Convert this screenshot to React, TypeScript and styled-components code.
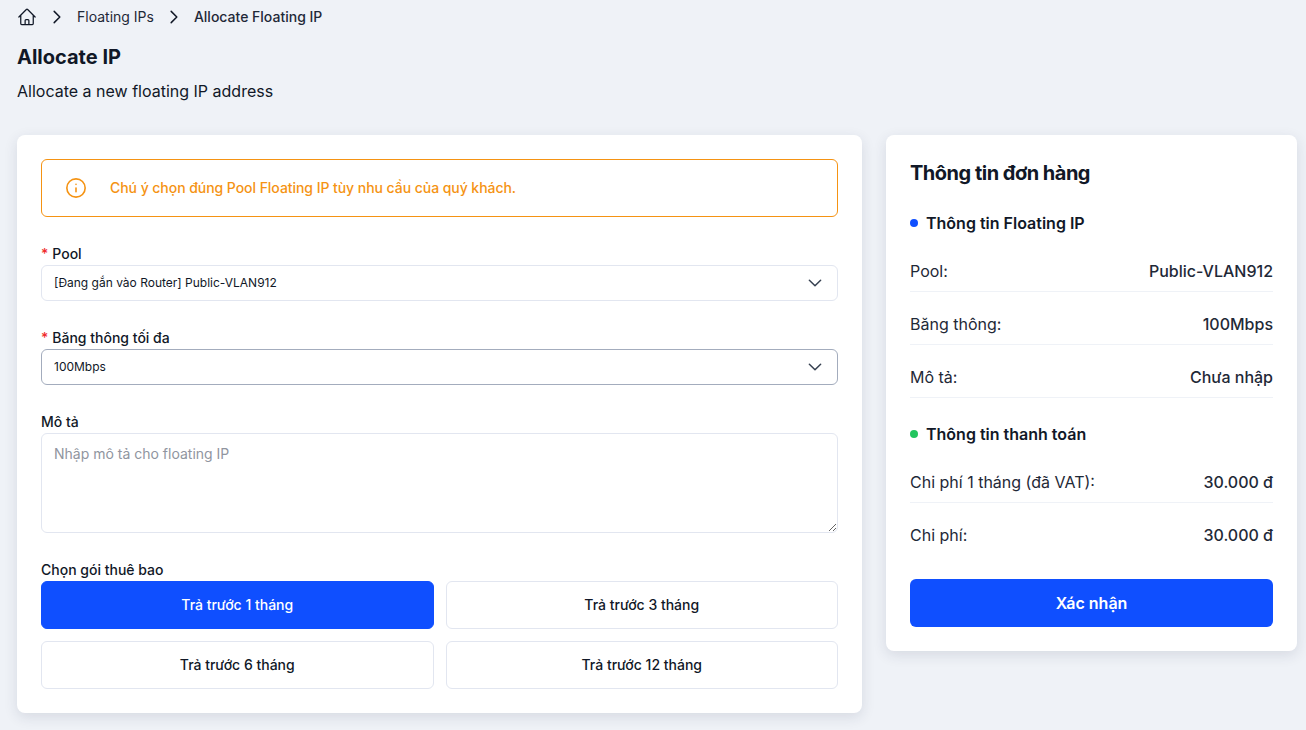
import React from 'react';
import styled, { createGlobalStyle } from 'styled-components';
import { HiOutlineHome, HiOutlineChevronRight, HiOutlineChevronDown } from 'react-icons/hi2';
import { Info } from 'lucide-react';

const GlobalStyle = createGlobalStyle`
    * {
        box-sizing: border-box;
    }

    html, body {
        margin: 0;
        padding: 0;
        background: #eff2f7;
    }

    body {
        font-family: Inter, "Noto Sans", sans-serif;
        color: #111827;
    }
`

const Page = styled.div`
    height: 730px;
    padding: 7px 9px 0 17px;
    overflow: hidden;
`

const Breadcrumb = styled.nav`
    display: flex;
    align-items: center;
    height: 20px;
    font-size: 14px;
    line-height: 20px;
`

const HomeLink = styled.span`
    display: flex;
    width: 20px;
    margin-right: 11px;
    color: #111827;
`

const Separator = styled.span`
    display: flex;
    width: 18px;
    margin-right: 11px;
    color: #111827;

    svg {
        stroke-width: 2;
    }
`

const Crumb = styled.span<{ $current?: boolean }>`
    margin-right: ${({ $current }) => $current ? '0' : '11px'};
    color: #1f2937;
    font-weight: ${({ $current }) => $current ? 500 : 400};
`

const Title = styled.h1`
    margin: 16px 0 0;
    font-size: 20px;
    line-height: 28px;
    font-weight: 700;
    color: #111827;
`

const Subtitle = styled.p`
    margin: 8px 0 0;
    font-size: 16px;
    line-height: 24px;
    color: #111827;
`

const Columns = styled.div`
    display: flex;
    align-items: flex-start;
    gap: 24px;
    margin-top: 32px;
`

const Card = styled.section`
    background: #fff;
    border-radius: 8px;
    padding: 24px;
    box-shadow: 0 4px 14px rgba(30, 40, 70, 0.12);
`

const FormCard = styled(Card)`
    width: 845px;
`

const SummaryCard = styled(Card)`
    width: 411px;
`

const Alert = styled.div`
    display: flex;
    align-items: center;
    gap: 23px;
    height: 58px;
    margin-bottom: 27px;
    padding: 0 23px;
    border: 1px solid #f59313;
    border-radius: 6px;
    color: #f59313;
    font-size: 14px;
    font-weight: 500;
    line-height: 20px;
    letter-spacing: -0.05px;
`

const Field = styled.div`
    margin-bottom: 27px;
`

const Label = styled.label`
    display: block;
    margin-bottom: 1px;
    font-size: 14px;
    line-height: 20px;
    font-weight: 500;
    color: #111827;
`

const Required = styled.span`
    margin-right: 4px;
    color: #ef2b2b;
`

const Select = styled.div<{ $active?: boolean }>`
    display: flex;
    align-items: center;
    justify-content: space-between;
    height: 36px;
    padding: 0 13px 0 12px;
    background: #fff;
    border: 1px solid ${({ $active }) => $active ? '#a3acbd' : '#e2e6f0'};
    border-radius: 6px;
    font-size: 12px;
    line-height: 16px;
    color: #111827;

    svg {
        color: #374151;
        stroke-width: 2;
    }
`

const Textarea = styled.textarea`
    display: block;
    width: 100%;
    height: 100px;
    padding: 10px 12px;
    background: #fff;
    border: 1px solid #e2e6f0;
    border-radius: 6px;
    outline: none;
    font-family: inherit;
    font-size: 14px;
    line-height: 20px;
    color: #111827;

    &::placeholder {
        color: #9095a0;
    }
`

const PlanGrid = styled.div`
    display: grid;
    grid-template-columns: 1fr 1fr;
    gap: 12px;
`

const PlanButton = styled.button<{ $selected?: boolean }>`
    height: 48px;
    padding: 0 0 2px;
    background: ${({ $selected }) => $selected ? '#0f4fff' : '#fff'};
    border: 1px solid ${({ $selected }) => $selected ? '#0f4fff' : '#e2e6f0'};
    border-radius: 6px;
    font-family: inherit;
    font-size: 14px;
    font-weight: 500;
    color: ${({ $selected }) => $selected ? '#fff' : '#111827'};
`

const SummaryTitle = styled.h2`
    margin: 0 0 24px;
    font-size: 20px;
    line-height: 28px;
    font-weight: 700;
    letter-spacing: -0.5px;
    color: #111827;
`

const SectionHeading = styled.h3`
    display: flex;
    align-items: center;
    gap: 8px;
    margin: 0 0 24px;
    font-size: 16px;
    line-height: 24px;
    font-weight: 600;
    color: #111827;
`

const Dot = styled.span<{ color: string }>`
    width: 8px;
    height: 8px;
    border-radius: 50%;
    background: ${({ color }) => color};
`

const Rows = styled.div`
    display: flex;
    flex-direction: column;
    gap: 20px;
    margin-bottom: 24px;
`

const Row = styled.div<{ $plain?: boolean }>`
    display: flex;
    justify-content: space-between;
    padding-bottom: 8px;
    border-bottom: ${({ $plain }) => $plain ? 'none' : '1px solid #eff2f7'};
    font-size: 16px;
    line-height: 24px;
    color: #1f2937;
`

const RowValue = styled.span`
    font-weight: 500;
    color: #1f2937;
`

const ConfirmButton = styled.button`
    display: block;
    width: 100%;
    height: 48px;
    background: #0f4fff;
    border: none;
    border-radius: 6px;
    font-family: inherit;
    font-size: 16px;
    font-weight: 600;
    color: #fff;
`

const plans = ['Trả trước 1 tháng', 'Trả trước 3 tháng', 'Trả trước 6 tháng', 'Trả trước 12 tháng'];

const App = () => {
    return (
        <Page>
            <GlobalStyle />
            <Breadcrumb>
                <HomeLink><HiOutlineHome size={20} /></HomeLink>
                <Separator><HiOutlineChevronRight size={18} /></Separator>
                <Crumb>Floating IPs</Crumb>
                <Separator><HiOutlineChevronRight size={18} /></Separator>
                <Crumb $current>Allocate Floating IP</Crumb>
            </Breadcrumb>
            <Title>Allocate IP</Title>
            <Subtitle>Allocate a new floating IP address</Subtitle>
            <Columns>
                <FormCard>
                    <Alert>
                        <Info size={22} strokeWidth={1.75} />
                        Chú ý chọn đúng Pool Floating IP tùy nhu cầu của quý khách.
                    </Alert>
                    <Field>
                        <Label><Required>*</Required>Pool</Label>
                        <Select>
                            [Đang gắn vào Router] Public-VLAN912
                            <HiOutlineChevronDown size={18} />
                        </Select>
                    </Field>
                    <Field>
                        <Label><Required>*</Required>Băng thông tối đa</Label>
                        <Select $active>
                            100Mbps
                            <HiOutlineChevronDown size={18} />
                        </Select>
                    </Field>
                    <Field>
                        <Label>Mô tả</Label>
                        <Textarea placeholder="Nhập mô tả cho floating IP" />
                    </Field>
                    <div>
                        <Label>Chọn gói thuê bao</Label>
                        <PlanGrid>
                            {plans.map((plan, index) => (
                                <PlanButton key={plan} $selected={index === 0}>{plan}</PlanButton>
                            ))}
                        </PlanGrid>
                    </div>
                </FormCard>
                <SummaryCard>
                    <SummaryTitle>Thông tin đơn hàng</SummaryTitle>
                    <SectionHeading><Dot color="#0f4fff" />Thông tin Floating IP</SectionHeading>
                    <Rows>
                        <Row><span>Pool:</span><RowValue>Public-VLAN912</RowValue></Row>
                        <Row><span>Băng thông:</span><RowValue>100Mbps</RowValue></Row>
                        <Row><span>Mô tả:</span><RowValue>Chưa nhập</RowValue></Row>
                    </Rows>
                    <SectionHeading><Dot color="#22c55e" />Thông tin thanh toán</SectionHeading>
                    <Rows>
                        <Row><span>Chi phí 1 tháng (đã VAT):</span><RowValue>30.000 đ</RowValue></Row>
                        <Row $plain><span>Chi phí:</span><RowValue>30.000 đ</RowValue></Row>
                    </Rows>
                    <ConfirmButton>Xác nhận</ConfirmButton>
                </SummaryCard>
            </Columns>
        </Page>
    );
};

export default App;
